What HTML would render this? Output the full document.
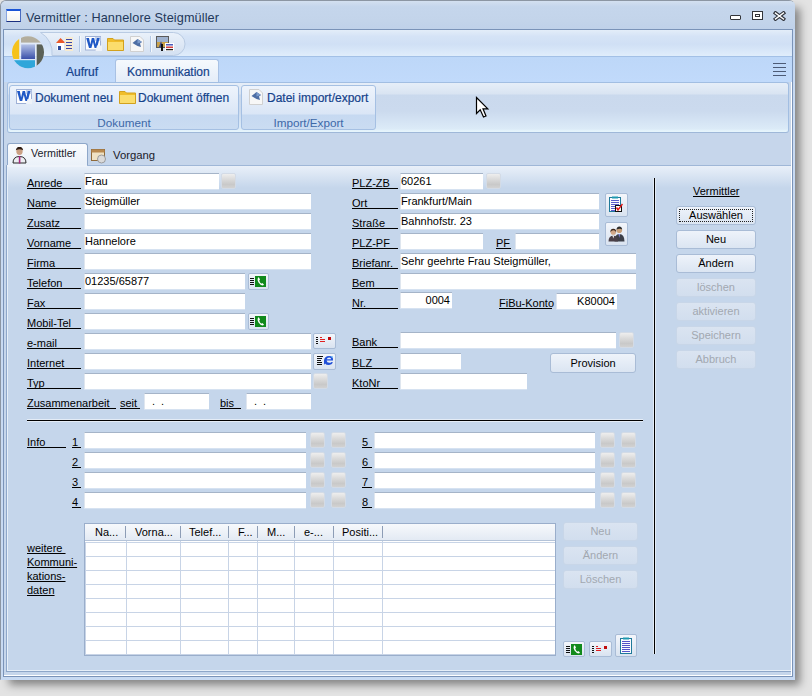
<!DOCTYPE html>
<html><head><meta charset="utf-8">
<style>
*{margin:0;padding:0;box-sizing:border-box}
html,body{width:812px;height:696px;overflow:hidden;background:#e3e3e3;font-family:"Liberation Sans",sans-serif;font-size:11px;color:#000}
.a{position:absolute}
.lbl{position:absolute;font-size:11px;border-bottom:1px solid #000;height:16px;padding-top:3px;line-height:14px;white-space:nowrap}
.tb{position:absolute;background:#fff;border-top:1px solid #a5b4c8;border-left:1px solid #dfe6ef;height:16px;font-size:11px;line-height:15px;box-shadow:0 1px 0 rgba(255,255,255,.3);padding-left:0;white-space:nowrap;overflow:hidden}
.r{text-align:right;padding-right:2px}
.sb{position:absolute;width:15px;height:16px;border:1px solid #d3dbe6;border-radius:2px;background:linear-gradient(#eeeeee,#dcdcdc 35%,#c9c9c9 75%,#d2d2d2)}
.ib{position:absolute;border:1px solid #a9bcd6;border-radius:2px;background:linear-gradient(#f3f6fb,#d9e3f0)}
.btn{position:absolute;border:1px solid #a9bcd6;border-radius:3px;background:linear-gradient(#eef3fa,#dbe5f2);text-align:center;font-size:11px;line-height:17px;height:19px;white-space:nowrap}
.dis{color:#a2a8b0;border-color:#c8d6e8;background:linear-gradient(#dae4f1,#d2deee)}
.rt{position:absolute;color:#15428b;font-size:12px;-webkit-text-stroke:0.2px #15428b;white-space:nowrap}
.glbl{position:absolute;color:#3d68a8;font-size:11.7px;text-align:center;white-space:nowrap}
.grp{position:absolute;border:1px solid #a5c0e3;border-radius:3px;background:linear-gradient(#eef4fc 0,#dae6f6 28px,#c6d9f1 29px,#cadcf2)}
.hd{position:absolute;top:0;height:16px;line-height:16px;font-size:11px;white-space:nowrap;overflow:hidden}.hd::after{content:"";position:absolute;right:0;top:2px;height:12px;width:1px;background:#8d9db6}
</style></head><body>
<!-- shadow -->
<div class="a" style="left:9px;top:8px;width:791px;height:677px;background:rgba(0,0,0,.42);filter:blur(4px)"></div>
<!-- window -->
<div class="a" style="left:0;top:0;width:795px;height:680px;background:#c8daf2;border:1px solid #8c96a3;border-right-color:#c8daf2;border-bottom-color:#c8daf2;border-radius:6px 6px 0 0"></div>
<div class="a" style="left:1px;top:1px;width:794px;height:28px;border-radius:5px 5px 0 0;background:linear-gradient(#d3e0f0,#c5d6ec 20%,#c3d4ea 70%,#bfd1e9)"></div>
<div class="a" style="left:6px;top:9px;width:15px;height:13px;background:linear-gradient(#fff,#f4f4ee);border:1px solid #4a6cc0;border-left-color:#8aa6e0;border-top:2px solid #1a55d6;border-bottom-color:#1a2f80"></div>
<div class="a" style="left:26px;top:11px;font-size:12.7px;letter-spacing:0.1px;color:#22385a;white-space:nowrap">Vermittler : Hannelore Steigmüller</div>
<div class="a" style="left:730px;top:15px;width:11px;height:5px;border:1px solid #33353a;background:#fff;border-radius:1px"></div>
<div class="a" style="left:752px;top:11px;width:11px;height:9px;border:1px solid #33353a;background:#fff"></div>
<div class="a" style="left:755px;top:14px;width:5px;height:3px;border:1px solid #33353a"></div>
<svg class="a" style="left:773px;top:11px" width="13" height="10" viewBox="0 0 13 10"><path d="M2.5 2 L10.5 8 M10.5 2 L2.5 8" stroke="#30343c" stroke-width="3.6" stroke-linecap="square"/><path d="M2.5 2 L10.5 8 M10.5 2 L2.5 8" stroke="#fff" stroke-width="1.4" stroke-linecap="square"/></svg>
<!-- inner frame -->
<div class="a" style="left:3px;top:29px;width:790px;height:648px;border:1px solid #7a93b8;background:#c6d6eb;box-shadow:inset -1px -1px 0 #fff"></div>
<div class="a" style="left:4px;top:30px;width:788px;height:26px;background:linear-gradient(#e3edf9,#d5e3f6 25%,#d0e0f5 55%,#e0edfb)"></div>
<div class="a" style="left:4px;top:56px;width:788px;height:26px;background:linear-gradient(#bdd7f8,#c1dafb);border-top:1px solid #a3c0e6"></div>
<!-- QAT pill -->
<svg class="a" style="left:38px;top:32px" width="150" height="24" viewBox="0 0 150 24">
  <defs><linearGradient id="qg" x1="0" y1="0" x2="0" y2="1"><stop offset="0" stop-color="#eaf1fa"/><stop offset="1" stop-color="#d3e0f1"/></linearGradient></defs>
  <path d="M2.5 0.5 H135.5 A11.5 11.5 0 0 1 135.5 23.5 H14 A23 23 0 0 0 2.5 0.5 Z" fill="url(#qg)" stroke="#b9cbe3"/>
  <line x1="41.5" y1="4" x2="41.5" y2="20" stroke="#b3c8e4"/><line x1="42.5" y1="4" x2="42.5" y2="20" stroke="#f4f8fc"/>
  <line x1="112.5" y1="4" x2="112.5" y2="20" stroke="#b3c8e4"/><line x1="113.5" y1="4" x2="113.5" y2="20" stroke="#f4f8fc"/>
</svg>
<!-- office button -->
<svg class="a" style="left:8px;top:32px" width="40" height="40" viewBox="0 0 40 40">
  <defs>
    <clipPath id="oc"><circle cx="20" cy="20.2" r="16"/></clipPath>
    <linearGradient id="obg" x1="0" y1="0" x2="0" y2="1"><stop offset="0" stop-color="#b4c2e6"/><stop offset="1" stop-color="#3a50aa"/></linearGradient>
  </defs>
  <g clip-path="url(#oc)">
    <rect x="0" y="0" width="40" height="40" fill="#e8eef8" opacity=".7"/>
    <rect x="0" y="0" width="11.2" height="27" fill="#f6c21c"/>
    <rect x="13" y="0" width="27" height="10.6" fill="#b3ae9e"/>
    <rect x="28.7" y="12.4" width="12" height="28" fill="#5b6157"/>
    <rect x="0" y="28.2" width="27" height="12" fill="#2fa6da"/>
    <rect x="13.2" y="12.4" width="13.8" height="14.6" fill="url(#obg)"/>
  </g>
</svg>
<!-- QAT icons -->
<svg class="a" style="left:56px;top:37px" width="17" height="14" viewBox="0 0 17 14">
  <rect x="9" y="0" width="8" height="14" fill="#f7ebcf"/>
  <path d="M10 2.5h6M10 5.5h6M10 8.5h6M10 11.5h6" stroke="#3a48aa" stroke-width="1.2"/>
  <path d="M0 6 L4.5 1 L8.5 5 L8.5 6 Z" fill="#ea5a2a"/><rect x="1" y="6" width="7" height="7" fill="#fff"/><rect x="2" y="9" width="3" height="4" fill="#2c4b9c"/>
</svg>
<svg class="a" style="left:85px;top:36px" width="17" height="15" viewBox="0 0 17 15">
  <rect x="0.5" y="0.5" width="15" height="13.5" fill="#fdfdfe" stroke="#9fb1d6"/>
  <rect x="10" y="1" width="5.5" height="4" fill="#c6d4ee"/>
  <path d="M1.2 2 H4 L5.3 8.5 L6.8 2 H9.2 L10.6 8.5 L11.9 2 H14.6 L12 12 H9.6 L8 6 L6.4 12 H4 Z" fill="#1f58c6"/>
  <path d="M12 9.5 L17 9.5 L17 15 L10.5 15 Z" fill="#eef2f8"/>
</svg>
<svg class="a" style="left:107px;top:37px" width="17" height="14" viewBox="0 0 17 14">
  <path d="M0.5 1.5 H6 L7.5 3 H16.5 V13.5 H0.5 Z" fill="#f0bd2a" stroke="#d2a11e"/>
  <path d="M1 5 H16 V13 H1 Z" fill="#fbdd6c"/>
</svg>
<svg class="a" style="left:130px;top:36px" width="14" height="16" viewBox="0 0 14 16">
  <path d="M0.5 0.5 H10 L13.5 4 V15.5 H0.5 Z" fill="#f7f7f7" stroke="#d0d0d0"/>
  <path d="M2.5 7 L7.5 3 L12 6 L10 7.5 L11 11 L7.5 10 Z" fill="#4e6ea4"/><path d="M7.5 3 L12 6 L7.5 7.5Z" fill="#7d9ccc"/>
</svg>
<svg class="a" style="left:156px;top:36px" width="18" height="15" viewBox="0 0 18 15">
  <rect x="0" y="0" width="13" height="12" fill="#5a5a5a"/><rect x="1" y="1" width="11" height="5" fill="#9fb2cf"/><rect x="1" y="6" width="11" height="5" fill="#c9a24a"/>
  <path d="M3 11 L5 5 L7 11Z" fill="#3a4a8a"/><rect x="5" y="8" width="2" height="7" fill="#111"/>
  <rect x="9" y="7" width="9" height="8" fill="#fff"/>
  <path d="M10 8.8h7" stroke="#2a3eb0" stroke-width="1.3"/><path d="M10 11.2h7" stroke="#d02020" stroke-width="1.3"/><path d="M10 13.6h7" stroke="#222" stroke-width="1.3"/>
</svg>
<!-- ribbon tabs -->
<div class="rt" style="left:66px;top:65px">Aufruf</div>
<div class="a" style="left:115px;top:59px;width:104px;height:24px;border:1px solid #a8c1e4;border-bottom:none;border-radius:3px 3px 0 0;background:linear-gradient(#f5f9fd,#e3ecf8)"></div>
<div class="rt" style="left:127px;top:65px">Kommunikation</div>
<div class="a" style="left:773px;top:63px;width:13px;height:1px;background:#4d5b76;box-shadow:0 4px 0 #4d5b76,0 8px 0 #4d5b76,0 12px 0 #4d5b76"></div>
<!-- ribbon panel -->
<div class="a" style="left:7px;top:82px;width:782px;height:51px;border:1px solid #a2bee2;border-bottom-color:#9fb8d8;border-radius:3px;background:linear-gradient(#e6eef8 0,#d9e4f2 11px,#cad9ed 12px,#cbdaee 28px,#dcebf8 46px,#e6f5fc 48px)"></div>
<div class="grp" style="left:9px;top:85px;width:230px;height:45px"></div>
<div class="grp" style="left:241px;top:85px;width:135px;height:45px"></div>
<svg class="a" style="left:16px;top:89px" width="16" height="15" viewBox="0 0 16 15">
  <rect x="0.5" y="0.5" width="15" height="14" fill="#fdfdfe" stroke="#9fb1d6"/>
  <rect x="10" y="1" width="5.5" height="4" fill="#c6d4ee"/>
  <path d="M1 2 H3.8 L5.1 8.5 L6.6 2 H9 L10.4 8.5 L11.7 2 H14.4 L11.8 12 H9.4 L7.8 6 L6.2 12 H3.8 Z" fill="#1f58c6"/>
  <path d="M11.5 10 L16 10 L16 15 L10 15 Z" fill="#eef2f8"/>
</svg>
<div class="rt" style="left:35px;top:91px">Dokument neu</div>
<svg class="a" style="left:119px;top:90px" width="17" height="14" viewBox="0 0 17 14">
  <path d="M0.5 1.5 H6 L7.5 3 H16.5 V13.5 H0.5 Z" fill="#f0bd2a" stroke="#d2a11e"/>
  <path d="M1 5 H16 V13 H1 Z" fill="#fbdd6c"/>
</svg>
<div class="rt" style="left:138px;top:91px">Dokument öffnen</div>
<div class="glbl" style="left:9px;top:116px;width:230px">Dokument</div>
<svg class="a" style="left:249px;top:89px" width="14" height="16" viewBox="0 0 14 16">
  <path d="M0.5 0.5 H10 L13.5 4 V15.5 H0.5 Z" fill="#f7f7f7" stroke="#d0d0d0"/>
  <path d="M2.5 7 L7.5 3 L12 6 L10 7.5 L11 11 L7.5 10 Z" fill="#4e6ea4"/><path d="M7.5 3 L12 6 L7.5 7.5Z" fill="#7d9ccc"/>
</svg>
<div class="rt" style="left:267px;top:91px">Datei import/export</div>
<div class="glbl" style="left:241px;top:116px;width:135px">Import/Export</div>
<!-- cursor -->
<svg class="a" style="left:475px;top:96px" width="15" height="23" viewBox="0 0 15 23">
  <path d="M1.5 1.5 V17.5 L5.2 13.8 L8.5 21 L11 20 L8 12.8 H12.8 Z" fill="#fff" stroke="#000" stroke-width="1.2" stroke-linejoin="miter"/>
</svg>
<!-- lower tabs -->
<div class="a" style="left:7px;top:143px;width:81px;height:23px;border:1px solid #8ea7c9;border-bottom:none;border-radius:3px 3px 0 0;background:linear-gradient(#fafcfe,#eaf1f9)"></div>
<svg class="a" style="left:12px;top:147px" width="15" height="17" viewBox="0 0 15 17">
  <path d="M4.3 4 Q4.3 0.5 7.5 0.5 Q10.7 0.5 10.7 4 Q10.7 8 7.5 8 Q4.3 8 4.3 4Z" fill="#caa084"/><path d="M3.8 3.2 Q4.5 -0.3 7.5 -0.3 Q10.5 -0.3 11.2 3.2 Q9 2.2 7.5 2.2 Q6 2.2 3.8 3.2Z" fill="#2e1c12"/>
  <path d="M1 16 Q1 9.5 7.5 9.5 Q14 9.5 14 16 Z" fill="#eceef2" stroke="#2a2a2a" stroke-width="1"/>
  <rect x="6.8" y="9" width="1.6" height="7.5" fill="#a7287e"/>
</svg>
<div class="a" style="left:31px;top:147px;font-size:10.7px;white-space:nowrap;color:#1a1a2a">Vermittler</div>
<svg class="a" style="left:90px;top:147px" width="17" height="17" viewBox="0 0 17 17">
  <rect x="1.5" y="2.5" width="13" height="11" fill="#efe2c4" stroke="#8f6a3a"/><rect x="1.5" y="2.5" width="13" height="3" fill="#b98a50"/>
  <circle cx="11.5" cy="12" r="4" fill="#dadada" stroke="#8c8c8c" stroke-width=".8"/>
</svg>
<div class="a" style="left:113px;top:149px;font-size:11.3px;white-space:nowrap;color:#1a1a2a">Vorgang</div>
<!-- content panel -->
<div class="a" style="left:6px;top:165px;width:785px;height:507px;border:1px solid #8ea7c9;border-top-color:#9fb7d7;border-right:none;background:linear-gradient(#e9f0f9,#c5d6eb 22px,#c5d6eb);box-shadow:inset 1px 0 0 #e6eff9,inset 0 -1px 0 #e6eff9"></div>
<div class="a" style="left:7px;top:165px;width:80px;height:2px;background:#eef3fa"></div>
<!-- left column labels -->
<div class="lbl" style="left:27px;top:173px;width:54px">Anrede</div>
<div class="lbl" style="left:27px;top:193px;width:54px">Name</div>
<div class="lbl" style="left:27px;top:213px;width:54px">Zusatz</div>
<div class="lbl" style="left:27px;top:233px;width:54px">Vorname</div>
<div class="lbl" style="left:27px;top:253px;width:54px">Firma</div>
<div class="lbl" style="left:27px;top:273px;width:54px">Telefon</div>
<div class="lbl" style="left:27px;top:293px;width:54px">Fax</div>
<div class="lbl" style="left:27px;top:313px;width:54px">Mobil-Tel</div>
<div class="lbl" style="left:27px;top:333px;width:54px">e-mail</div>
<div class="lbl" style="left:27px;top:353px;width:54px">Internet</div>
<div class="lbl" style="left:27px;top:373px;width:54px">Typ</div>
<div class="lbl" style="left:27px;top:393px;width:89px">Zusammenarbeit</div>
<div class="lbl" style="left:120px;top:393px;width:20px">seit</div>
<div class="lbl" style="left:220px;top:393px;width:21px">bis</div>
<!-- left column boxes -->
<div class="tb" style="left:84px;top:173px;width:135px">Frau</div>
<div class="sb" style="left:221px;top:173px"></div>
<div class="tb" style="left:84px;top:193px;width:227px">Steigmüller</div>
<div class="tb" style="left:84px;top:213px;width:227px"></div>
<div class="tb" style="left:84px;top:233px;width:227px">Hannelore</div>
<div class="tb" style="left:84px;top:253px;width:227px"></div>
<div class="tb" style="left:84px;top:273px;width:161px">01235/65877</div>
<div class="tb" style="left:84px;top:293px;width:161px"></div>
<div class="tb" style="left:84px;top:313px;width:161px"></div>
<div class="tb" style="left:84px;top:333px;width:227px"></div>
<div class="tb" style="left:84px;top:353px;width:227px"></div>
<div class="tb" style="left:84px;top:373px;width:227px"></div>
<div class="tb" style="left:144px;top:393px;width:65px;padding-left:7px;letter-spacing:6px">..</div>
<div class="tb" style="left:246px;top:393px;width:65px;padding-left:7px;letter-spacing:6px">..</div>
<!-- icon buttons left -->
<div class="ib" style="left:248px;top:273px;width:21px;height:17px"></div>
<div class="ib" style="left:248px;top:313px;width:21px;height:17px"></div>
<div class="ib" style="left:313px;top:333px;width:23px;height:16px"></div>
<div class="ib" style="left:313px;top:353px;width:23px;height:17px"></div>
<div class="sb" style="left:313px;top:373px;width:15px"></div>
<!-- right column labels -->
<div class="lbl" style="left:352px;top:173px;width:46px">PLZ-ZB</div>
<div class="lbl" style="left:352px;top:193px;width:46px">Ort</div>
<div class="lbl" style="left:352px;top:213px;width:46px">Straße</div>
<div class="lbl" style="left:352px;top:233px;width:46px">PLZ-PF</div>
<div class="lbl" style="left:496px;top:233px;width:15px">PF</div>
<div class="lbl" style="left:352px;top:253px;width:46px">Briefanr.</div>
<div class="lbl" style="left:352px;top:273px;width:46px">Bem</div>
<div class="lbl" style="left:352px;top:293px;width:46px">Nr.</div>
<div class="lbl" style="left:499px;top:293px;width:53px">FiBu-Konto</div>
<div class="lbl" style="left:352px;top:332px;width:46px">Bank</div>
<div class="lbl" style="left:352px;top:353px;width:46px">BLZ</div>
<div class="lbl" style="left:352px;top:373px;width:46px">KtoNr</div>
<!-- right column boxes -->
<div class="tb" style="left:400px;top:173px;width:83px">60261</div>
<div class="sb" style="left:486px;top:173px"></div>
<div class="tb" style="left:400px;top:193px;width:199px">Frankfurt/Main</div>
<div class="tb" style="left:400px;top:213px;width:199px">Bahnhofstr. 23</div>
<div class="tb" style="left:400px;top:233px;width:83px"></div>
<div class="tb" style="left:515px;top:233px;width:84px"></div>
<div class="tb" style="left:400px;top:253px;width:236px">Sehr geehrte Frau Steigmüller,</div>
<div class="tb" style="left:400px;top:273px;width:236px"></div>
<div class="tb r" style="left:400px;top:292px;width:52px">0004</div>
<div class="tb r" style="left:556px;top:293px;width:61px">K80004</div>
<div class="tb" style="left:400px;top:332px;width:216px"></div>
<div class="sb" style="left:619px;top:332px"></div>
<div class="tb" style="left:400px;top:353px;width:61px"></div>
<div class="tb" style="left:400px;top:373px;width:127px"></div>
<div class="btn" style="left:550px;top:353px;width:86px;height:20px;line-height:18px">Provision</div>
<div class="ib" style="left:605px;top:193px;width:23px;height:24px"></div>
<div class="ib" style="left:605px;top:222px;width:23px;height:24px"></div>
<!-- separator lines -->
<div class="a" style="left:27px;top:420px;width:616px;height:1px;background:#000;box-shadow:0 -1px 0 #e4ecf6,0 1px 0 #e4ecf6"></div>
<div class="a" style="left:654px;top:178px;width:1px;height:476px;background:#000;box-shadow:-1px 0 0 #e4ecf6,1px 0 0 #e4ecf6"></div>
<!-- info rows -->
<div class="lbl" style="left:27px;top:432px;width:39px">Info</div>
<div class="lbl" style="left:72px;top:432px;width:9px">1</div>
<div class="lbl" style="left:72px;top:452px;width:9px">2</div>
<div class="lbl" style="left:72px;top:472px;width:9px">3</div>
<div class="lbl" style="left:72px;top:492px;width:9px">4</div>
<div class="lbl" style="left:362px;top:432px;width:10px">5</div>
<div class="lbl" style="left:362px;top:452px;width:10px">6</div>
<div class="lbl" style="left:362px;top:472px;width:10px">7</div>
<div class="lbl" style="left:362px;top:492px;width:10px">8</div>
<div class="tb" style="left:84px;top:432px;width:222px"></div>
<div class="tb" style="left:84px;top:452px;width:222px"></div>
<div class="tb" style="left:84px;top:472px;width:222px"></div>
<div class="tb" style="left:84px;top:492px;width:222px"></div>
<div class="tb" style="left:374px;top:432px;width:221px"></div>
<div class="tb" style="left:374px;top:452px;width:221px"></div>
<div class="tb" style="left:374px;top:472px;width:221px"></div>
<div class="tb" style="left:374px;top:492px;width:221px"></div>
<div class="sb" style="left:310px;top:432px"></div><div class="sb" style="left:331px;top:432px"></div>
<div class="sb" style="left:310px;top:452px"></div><div class="sb" style="left:331px;top:452px"></div>
<div class="sb" style="left:310px;top:472px"></div><div class="sb" style="left:331px;top:472px"></div>
<div class="sb" style="left:310px;top:492px"></div><div class="sb" style="left:331px;top:492px"></div>
<div class="sb" style="left:600px;top:432px"></div><div class="sb" style="left:621px;top:432px"></div>
<div class="sb" style="left:600px;top:452px"></div><div class="sb" style="left:621px;top:452px"></div>
<div class="sb" style="left:600px;top:472px"></div><div class="sb" style="left:621px;top:472px"></div>
<div class="sb" style="left:600px;top:492px"></div><div class="sb" style="left:621px;top:492px"></div>
<!-- weitere label -->
<div class="a" style="left:27px;top:541px;line-height:14px;font-size:11px;text-decoration:underline;white-space:nowrap">weitere&nbsp;<br>Kommuni-<br>kations-<br>daten</div>
<!-- grid -->
<div class="a" style="left:84px;top:523px;width:472px;height:133px;border:1px solid #9aaecb;background:#fff;overflow:hidden">
  <div class="a" style="left:0;top:0;width:470px;height:17px;background:linear-gradient(#f7f9fc,#e3eaf4);border-bottom:1px solid #b4c3d8"></div>
  <div class="hd" style="left:0;width:41px;padding-left:10px">Na...</div>
  <div class="hd" style="left:41px;width:55px;padding-left:9px">Vorna...</div>
  <div class="hd" style="left:96px;width:48px;padding-left:8px">Telef...</div>
  <div class="hd" style="left:144px;width:29px;padding-left:9px">F...</div>
  <div class="hd" style="left:173px;width:37px;padding-left:9px">M...</div>
  <div class="hd" style="left:210px;width:39px;padding-left:9px">e-...</div>
  <div class="hd" style="left:249px;width:49px;padding-left:8px">Positi...</div>
  <div class="a" style="left:0;top:18px;width:470px;height:114px;background-image:linear-gradient(#c8d4e6 1px,transparent 1px),linear-gradient(90deg,#c8d4e6 1px,transparent 1px);background-size:100% 14px,100% 100%"></div>
  <div class="a" style="left:41px;top:17px;width:1px;height:116px;background:#c8d4e6"></div>
  <div class="a" style="left:95px;top:17px;width:1px;height:116px;background:#c8d4e6"></div>
  <div class="a" style="left:143px;top:17px;width:1px;height:116px;background:#c8d4e6"></div>
  <div class="a" style="left:172px;top:17px;width:1px;height:116px;background:#c8d4e6"></div>
  <div class="a" style="left:209px;top:17px;width:1px;height:116px;background:#c8d4e6"></div>
  <div class="a" style="left:248px;top:17px;width:1px;height:116px;background:#c8d4e6"></div>
  <div class="a" style="left:297px;top:17px;width:1px;height:116px;background:#c8d4e6"></div>
</div>
<!-- side buttons -->
<div class="a" style="left:693px;top:185px;font-size:11px;text-decoration:underline;white-space:nowrap">Vermittler</div>
<div class="btn" style="left:676px;top:206px;width:80px">Auswählen<div class="a" style="left:2px;top:2px;right:2px;bottom:2px;border:1px dotted #222"></div></div>
<div class="btn" style="left:676px;top:230px;width:80px">Neu</div>
<div class="btn" style="left:676px;top:254px;width:80px">Ändern</div>
<div class="btn dis" style="left:676px;top:278px;width:80px">löschen</div>
<div class="btn dis" style="left:676px;top:302px;width:80px">aktivieren</div>
<div class="btn dis" style="left:676px;top:326px;width:80px">Speichern</div>
<div class="btn dis" style="left:676px;top:350px;width:80px">Abbruch</div>
<div class="btn dis" style="left:563px;top:522px;width:75px">Neu</div>
<div class="btn dis" style="left:563px;top:546px;width:75px">Ändern</div>
<div class="btn dis" style="left:563px;top:570px;width:75px">Löschen</div>
<div class="ib" style="left:563px;top:641px;width:22px;height:16px"></div>
<div class="ib" style="left:589px;top:641px;width:23px;height:16px"></div>
<div class="ib" style="left:615px;top:634px;width:22px;height:23px"></div>
<!-- phone icons -->
<svg class="a" style="left:249px;top:275px" width="18" height="12" viewBox="0 0 18 12">
  <path d="M1 3.5h4M1 5.5h4M1 7.5h4M1 9.5h4" stroke="#111" stroke-width="1.1"/>
  <rect x="6" y="1" width="11" height="11" fill="#118a1c"/>
  <path d="M9 2.5 Q8 4 9.5 7.5 Q11.5 10.5 14 10.5 L15 9.5 L13.2 8 L12.4 8.7 Q10.8 7.8 10.2 5.6 L11 4.8 L10 2.5 Z" fill="#fff"/>
</svg>
<svg class="a" style="left:249px;top:315px" width="18" height="12" viewBox="0 0 18 12">
  <path d="M1 3.5h4M1 5.5h4M1 7.5h4M1 9.5h4" stroke="#111" stroke-width="1.1"/>
  <rect x="6" y="1" width="11" height="11" fill="#118a1c"/>
  <path d="M9 2.5 Q8 4 9.5 7.5 Q11.5 10.5 14 10.5 L15 9.5 L13.2 8 L12.4 8.7 Q10.8 7.8 10.2 5.6 L11 4.8 L10 2.5 Z" fill="#fff"/>
</svg>
<svg class="a" style="left:565px;top:643px" width="18" height="12" viewBox="0 0 18 12">
  <path d="M1 3.5h4M1 5.5h4M1 7.5h4M1 9.5h4" stroke="#111" stroke-width="1.1"/>
  <rect x="6" y="1" width="11" height="11" fill="#118a1c"/>
  <path d="M9 2.5 Q8 4 9.5 7.5 Q11.5 10.5 14 10.5 L15 9.5 L13.2 8 L12.4 8.7 Q10.8 7.8 10.2 5.6 L11 4.8 L10 2.5 Z" fill="#fff"/>
</svg>
<!-- email icons -->
<svg class="a" style="left:315px;top:336px" width="18" height="11" viewBox="0 0 18 11">
  <rect x="1" y="1" width="2" height="1" fill="#111"/><rect x="1" y="3" width="2" height="1" fill="#111"/><rect x="1" y="5" width="2" height="1" fill="#111"/><rect x="1" y="7" width="2" height="1" fill="#111"/>
  <rect x="5" y="1" width="2" height="1" fill="#e02020"/><rect x="5" y="3" width="5" height="1" fill="#e02020"/><rect x="5" y="5" width="5" height="1" fill="#e02020"/>
  <rect x="13" y="1" width="3" height="3" fill="#c00c0c"/>
</svg>
<svg class="a" style="left:591px;top:645px" width="18" height="11" viewBox="0 0 18 11">
  <rect x="1" y="1" width="2" height="1" fill="#111"/><rect x="1" y="3" width="2" height="1" fill="#111"/><rect x="1" y="5" width="2" height="1" fill="#111"/><rect x="1" y="7" width="2" height="1" fill="#111"/>
  <rect x="5" y="1" width="2" height="1" fill="#e02020"/><rect x="5" y="3" width="5" height="1" fill="#e02020"/><rect x="5" y="5" width="5" height="1" fill="#e02020"/>
  <rect x="13" y="1" width="3" height="3" fill="#c00c0c"/>
</svg>
<!-- IE icon -->
<svg class="a" style="left:317px;top:356px" width="17" height="10" viewBox="0 0 17 10">
  <path d="M0 0.5h6M0 2.5h5M0 4.5h4M0 6.5h5M0 8.5h5" stroke="#111" stroke-width="1"/>
  <path d="M7 4.5 Q7.5 0 12 0 Q16.5 0 16 4.6 H9.6 Q9.8 6.8 12.3 6.8 Q13.8 6.8 14.6 5.9 L16 6.6 Q14.8 9 12 9 Q9 9 8 7.5 Q7.5 8.5 7 8.8 Z" fill="#1f4fd8"/>
  <path d="M9.7 3.3 Q10.2 1.6 12.2 1.6 Q14 1.6 14.2 3.3 Z" fill="#eaf3ff"/>
  <path d="M14 1 Q15.5 0.5 16 1.2" stroke="#4ab0f0" stroke-width="1" fill="none"/>
</svg>
<!-- clipboard with check -->
<svg class="a" style="left:609px;top:196px" width="14" height="17" viewBox="0 0 14 17">
  <rect x="0.5" y="1.5" width="11" height="14" fill="#fbfbff" stroke="#1f7a9a"/>
  <rect x="3" y="0.5" width="6" height="2" fill="#1f9ab0"/>
  <path d="M2 4.5h8M2 6.5h8M2 8.5h8M2 10.5h4M2 12.5h4M2 14.5h4" stroke="#5a5acc" stroke-width="1"/>
  <rect x="6.5" y="9.5" width="6" height="6" fill="#fff" stroke="#111"/>
  <path d="M7.5 11.5 L9 14 L13.5 8" stroke="#e01818" stroke-width="1.5" fill="none"/>
</svg>
<!-- people icon -->
<svg class="a" style="left:608px;top:226px" width="17" height="16" viewBox="0 0 17 16">
  <circle cx="11.3" cy="4.2" r="2.8" fill="#c9a07a"/><path d="M8.4 3.5 Q9 0.6 11.3 0.6 Q13.8 0.6 14.2 3.5 Q12 2.2 8.4 3.5Z" fill="#2c2c2c"/>
  <path d="M6.5 15.5 Q6.5 8 11.3 8 Q16.5 8 16.5 15.5 Z" fill="#3c3f48"/><path d="M10.5 8 L11.3 12 L12.1 8Z" fill="#8a8ae0"/>
  <circle cx="5.3" cy="6.2" r="2.6" fill="#d2a888"/><path d="M2.5 6.5 Q2 2.8 5.3 2.8 Q8.6 2.8 8.1 6.5 Q7.5 4.2 5.3 4.3 Q3.2 4.3 2.5 6.5Z" fill="#3a2418"/>
  <path d="M0.5 15.5 Q0.5 9.8 5.3 9.8 Q10 9.8 10 15.5 Z" fill="#4a4048"/><path d="M4.4 9.8 L5.3 12.5 L6.2 9.8Z" fill="#eee"/>
</svg>
<!-- clipboard bottom -->
<svg class="a" style="left:620px;top:637px" width="13" height="17" viewBox="0 0 13 17">
  <rect x="0.5" y="1.5" width="11" height="15" fill="#fbfbff" stroke="#1f7a9a"/>
  <rect x="3" y="0.5" width="6" height="2" fill="#1f9ab0"/>
  <path d="M2 4.5h8M2 6.5h8M2 8.5h8M2 10.5h8M2 12.5h8M2 14.5h8" stroke="#5454c8" stroke-width="1"/>
</svg>
</body></html>
